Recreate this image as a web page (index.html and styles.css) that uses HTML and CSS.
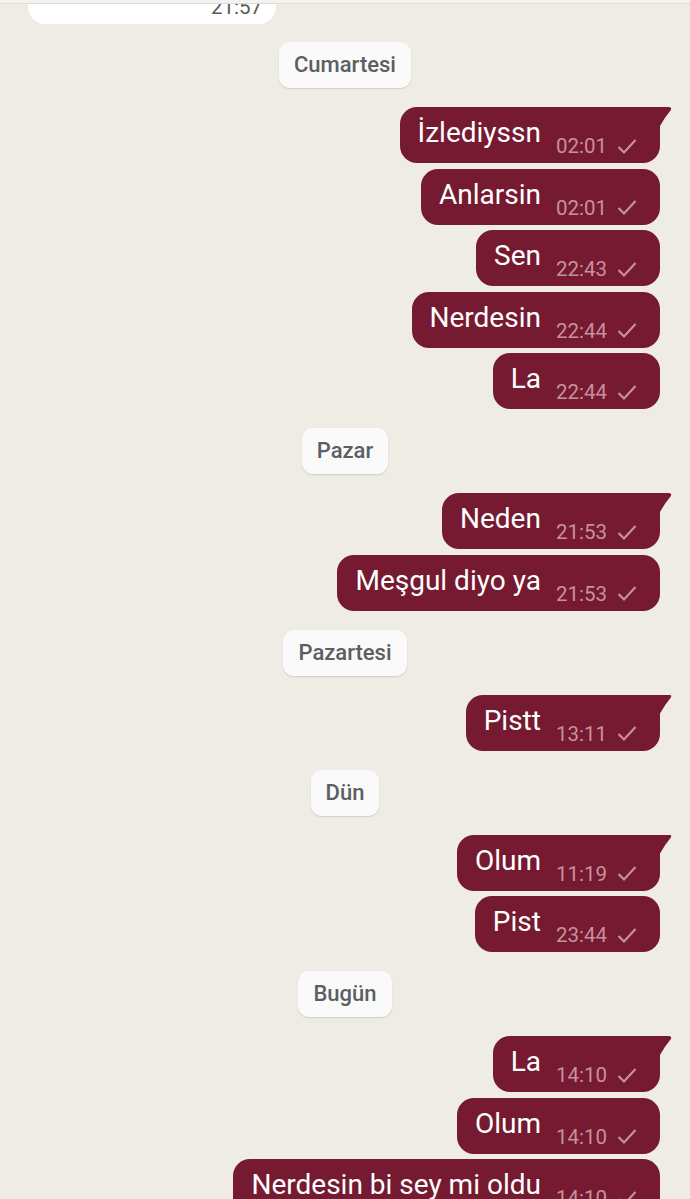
FILE: index.html
```html
<!DOCTYPE html>
<html lang="tr">
<head>
  <meta charset="UTF-8">
  <title>Sohbet</title>
  <link rel="stylesheet" href="styles.css">
</head>

<body>

  <!-- edge of the toolbar above the chat -->
  <div class="top-edge"></div>

  <div id="chat">

    <div class="row in">
      <div class="bubble in-bubble">
        <span class="text spacer"></span>
        <span class="meta">21:57</span>
      </div>
    </div>

    <div class="day first"><span>Cumartesi</span></div>

    <div class="row out">
      <div class="bubble tail">
        <span class="text">İzlediyssn</span>
        <span class="meta">02:01 <svg class="tick" viewBox="0 0 20 17"><polyline points="1.5,9 7,14.5 18.5,2"/></svg></span>
      </div>
    </div>
    <div class="row out">
      <div class="bubble">
        <span class="text">Anlarsin</span>
        <span class="meta">02:01 <svg class="tick" viewBox="0 0 20 17"><polyline points="1.5,9 7,14.5 18.5,2"/></svg></span>
      </div>
    </div>
    <div class="row out">
      <div class="bubble">
        <span class="text">Sen</span>
        <span class="meta">22:43 <svg class="tick" viewBox="0 0 20 17"><polyline points="1.5,9 7,14.5 18.5,2"/></svg></span>
      </div>
    </div>
    <div class="row out">
      <div class="bubble">
        <span class="text">Nerdesin</span>
        <span class="meta">22:44 <svg class="tick" viewBox="0 0 20 17"><polyline points="1.5,9 7,14.5 18.5,2"/></svg></span>
      </div>
    </div>
    <div class="row out">
      <div class="bubble">
        <span class="text">La</span>
        <span class="meta">22:44 <svg class="tick" viewBox="0 0 20 17"><polyline points="1.5,9 7,14.5 18.5,2"/></svg></span>
      </div>
    </div>

    <div class="day"><span>Pazar</span></div>

    <div class="row out">
      <div class="bubble tail">
        <span class="text">Neden</span>
        <span class="meta">21:53 <svg class="tick" viewBox="0 0 20 17"><polyline points="1.5,9 7,14.5 18.5,2"/></svg></span>
      </div>
    </div>
    <div class="row out">
      <div class="bubble">
        <span class="text">Meşgul diyo ya</span>
        <span class="meta">21:53 <svg class="tick" viewBox="0 0 20 17"><polyline points="1.5,9 7,14.5 18.5,2"/></svg></span>
      </div>
    </div>

    <div class="day"><span>Pazartesi</span></div>

    <div class="row out">
      <div class="bubble tail">
        <span class="text">Pistt</span>
        <span class="meta">13:11 <svg class="tick" viewBox="0 0 20 17"><polyline points="1.5,9 7,14.5 18.5,2"/></svg></span>
      </div>
    </div>

    <div class="day"><span>Dün</span></div>

    <div class="row out">
      <div class="bubble tail">
        <span class="text">Olum</span>
        <span class="meta">11:19 <svg class="tick" viewBox="0 0 20 17"><polyline points="1.5,9 7,14.5 18.5,2"/></svg></span>
      </div>
    </div>
    <div class="row out">
      <div class="bubble">
        <span class="text">Pist</span>
        <span class="meta">23:44 <svg class="tick" viewBox="0 0 20 17"><polyline points="1.5,9 7,14.5 18.5,2"/></svg></span>
      </div>
    </div>

    <div class="day"><span>Bugün</span></div>

    <div class="row out">
      <div class="bubble tail">
        <span class="text">La</span>
        <span class="meta">14:10 <svg class="tick" viewBox="0 0 20 17"><polyline points="1.5,9 7,14.5 18.5,2"/></svg></span>
      </div>
    </div>
    <div class="row out">
      <div class="bubble">
        <span class="text">Olum</span>
        <span class="meta">14:10 <svg class="tick" viewBox="0 0 20 17"><polyline points="1.5,9 7,14.5 18.5,2"/></svg></span>
      </div>
    </div>
    <div class="row out">
      <div class="bubble">
        <span class="text">Nerdesin bi sey mi oldu</span>
        <span class="meta">14:10 <svg class="tick" viewBox="0 0 20 17"><polyline points="1.5,9 7,14.5 18.5,2"/></svg></span>
      </div>
    </div>

  </div>

</body>
</html>
```

FILE: styles.css
```css
html, body {
  height: 100%;
}

body {
  margin: 0;
  background: #efebe5;
  font-family: Roboto, "Noto Sans", sans-serif;
  overflow: hidden;
}

.top-edge {
  position: absolute;
  top: 0;
  left: 0;
  right: 0;
  height: 3px;
  background: #f5f3f0;
  border-bottom: 1px solid #dedad4;
  z-index: 2;
}

#chat {
  display: flex;
  flex-direction: column;
}

.row {
  display: flex;
  margin-top: 5.5px;
}

.row.out {
  justify-content: flex-end;
  padding-right: 30px;
}

.row.in {
  padding-left: 28px;
  margin-top: -32px;
}

.bubble {
  position: relative;
  display: flex;
  align-items: flex-end;
  gap: 15px;
  padding: 8px 23px 5px 18px;
  background: #751a30;
  color: #ffffff;
  border-radius: 17px;
}

.bubble.tail {
  border-top-right-radius: 0;
}

.bubble.tail::after {
  content: "";
  position: absolute;
  top: 0;
  right: -12px;
  width: 13px;
  height: 19px;
  background: #751a30;
  clip-path: path('M0 0 L10 0 Q13.5 0.5 11.5 3.5 Q6 10 1 19 L0 19 Z');
}

.text {
  font-size: 28px;
  line-height: 36px;
  padding-bottom: 7px;
  white-space: nowrap;
}

.meta {
  display: flex;
  align-items: center;
  gap: 10px;
  font-size: 20.5px;
  line-height: 24px;
  color: #c8909e;
  white-space: nowrap;
}

.tick {
  width: 20px;
  height: 17px;
  fill: none;
  stroke: #c8909e;
  stroke-width: 2.2;
}

.in-bubble {
  width: 248px;
  box-sizing: border-box;
  height: 56px;
  padding: 7px 14px 5px 18px;
  background: #ffffff;
}

.in-bubble .spacer {
  flex: 1;
}

.in-bubble .meta {
  color: #5a5a5a;
}

.day {
  display: flex;
  justify-content: center;
  margin: 19px 0 13.5px;
}

.day.first {
  margin-top: 18px;
}

.day span {
  display: block;
  height: 46px;
  line-height: 46px;
  padding: 0 15px;
  background: #fafafa;
  border-radius: 11px;
  box-shadow: 0 1px 1.5px rgba(0, 0, 0, 0.13);
  font-size: 22px;
  font-weight: 500;
  color: #5b5e62;
}
```
